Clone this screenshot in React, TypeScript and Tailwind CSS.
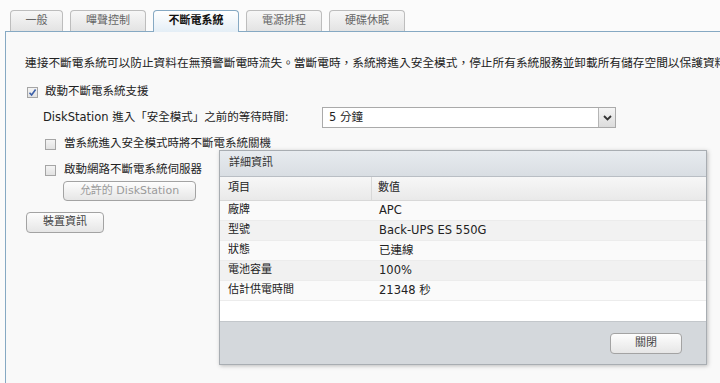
const font = "font-['DejaVu_Sans','Noto_Sans_CJK_TC',sans-serif]";

const tabs = ["一般", "嗶聲控制", "不斷電系統", "電源排程", "硬碟休眠"];

const rows = [
  { k: "廠牌", v: "APC", bg: "bg-[#fafafa]" },
  { k: "型號", v: "Back-UPS ES 550G", bg: "bg-[#f2f2f2]" },
  { k: "狀態", v: "已連線", bg: "bg-[#fafafa]" },
  { k: "電池容量", v: "100%", bg: "bg-[#f1f1f1]" },
  { k: "估計供電時間", v: "21348 秒", bg: "bg-[#fafafa]" },
];

const Checkbox = ({ checked }: { checked?: boolean }) => (
  <span className="flex h-[11px] w-[11px] items-center justify-center border border-[#a5a5a5] bg-gradient-to-b from-[#f4f4f4] to-[#e2e2e2]">
    {checked && (
      <svg width="9" height="9" viewBox="0 0 9 9">
        <path d="M1.5 4.8 L3.6 7 L7.6 1.6" fill="none" stroke="#3b5fa8" strokeWidth="1.6" />
      </svg>
    )}
  </span>
);

const Button = ({ children, className }: { children: React.ReactNode; className?: string }) => (
  <div
    className={
      "flex items-center justify-center rounded-[4px] border border-[#a3a3a3] bg-gradient-to-b from-[#fdfdfd] to-[#e6e6e6] text-[11px] " +
      (className ?? "")
    }
  >
    {children}
  </div>
);

export default function App() {
  return (
    <div className={`relative h-[383px] w-[720px] overflow-hidden bg-[#fbfbfb] text-[#333] ${font}`}>
      {/* tabs */}
      <div className="flex gap-[7px] pl-[10px] pt-[10px]">
        {tabs.map((t, i) =>
          i === 2 ? (
            <div
              key={t}
              className="-mb-px flex h-[22px] w-[86px] items-center justify-center rounded-t-[4px] border border-b-0 border-[#86a9c3] bg-gradient-to-b from-[#ffffff] to-[#e4eef6] text-[11px] font-bold text-[#111]"
            >
              {t}
            </div>
          ) : (
            <div
              key={t}
              className={
                "flex h-[21px] items-center justify-center rounded-t-[4px] border border-b-0 border-[#bdbdbd] bg-gradient-to-b from-[#f7f7f7] to-[#e3e3e3] text-[11px] text-[#666] " +
                (i === 0 ? "w-[53px]" : "w-[76px]")
              }
            >
              {t}
            </div>
          )
        )}
      </div>

      {/* content panel */}
      <div className="ml-[5px] h-[360px] border-l border-t border-[#86a9c3] bg-[#f9f9f9] pl-[19px] pt-[23px]">
        <p className="whitespace-nowrap text-[11.7px] leading-[16px] text-[#222]">
          連接不斷電系統可以防止資料在無預警斷電時流失。當斷電時，系統將進入安全模式，停止所有系統服務並卸載所有儲存空間以保護資料。
        </p>

        <div className="mt-[13px] flex h-[16px] items-center gap-[7px] pl-[2px]">
          <Checkbox checked />
          <span className="text-[11.5px] text-[#222]">啟動不斷電系統支援</span>
        </div>

        <div className="mt-[7px] flex h-[21px] items-center pl-[18px]">
          <span className="w-[279px] text-[11.5px] text-[#222]">DiskStation 進入「安全模式」之前的等待時間:</span>
          <div className="flex h-[21px] w-[294px] border border-[#aaaaaa] bg-white">
            <span className="flex-1 pl-[6px] text-[11.5px] leading-[19px] text-[#222]">5 分鐘</span>
            <span className="flex w-[17px] items-center justify-center border-l border-[#b5b5b5] bg-gradient-to-b from-[#f5f5f5] to-[#dcdcdc]">
              <svg width="9" height="6" viewBox="0 0 9 6">
                <path d="M1 1 L4.5 4.5 L8 1" fill="none" stroke="#333" strokeWidth="1.8" />
              </svg>
            </span>
          </div>
        </div>

        <div className="mt-[8px] flex h-[16px] items-center gap-[8px] pl-[20px]">
          <Checkbox />
          <span className="text-[11.5px] text-[#222]">當系統進入安全模式時將不斷電系統關機</span>
        </div>

        <div className="mt-[10px] flex h-[16px] items-center gap-[8px] pl-[20px]">
          <Checkbox />
          <span className="text-[11.5px] text-[#222]">啟動網路不斷電系統伺服器</span>
        </div>

        <div className="mt-[3px] pl-[38px]">
          <Button className="h-[20px] w-[133px] text-[#9a9a9a]">允許的 DiskStation</Button>
        </div>

        <div className="mt-[11px] pl-[1px]">
          <Button className="h-[21px] w-[78px] text-[#444]">裝置資訊</Button>
        </div>
      </div>

      {/* dialog */}
      <div className="absolute left-[219px] top-[150px] flex h-[215px] w-[488px] flex-col border border-[#a8adb2] bg-white shadow-[1px_1px_4px_rgba(0,0,0,0.25)]">
        <div className="flex h-[26px] items-center border-b border-[#b9bec4] bg-gradient-to-b from-[#e7ebef] to-[#d9dee3] pl-[9px] text-[11px] text-[#333]">
          詳細資訊
        </div>
        <div className="flex h-[24px] border-b border-[#d8d8d8] bg-gradient-to-b from-[#f7f7f7] to-[#e9e9e9] text-[11px] text-[#222]">
          <span className="flex w-[152px] items-center border-r border-[#d8d8d8] pl-[8px]">項目</span>
          <span className="flex items-center pl-[6px]">數值</span>
        </div>
        {rows.map((r) => (
          <div key={r.k} className={`flex h-[20px] items-center border-b border-[#ececec] text-[#222] ${r.bg}`}>
            <span className="w-[152px] pl-[8px] text-[11px]">{r.k}</span>
            <span className="pl-[7px] text-[11.5px]">{r.v}</span>
          </div>
        ))}
        <div className="flex-1 bg-white" />
        <div className="flex h-[43px] items-center justify-end border-t border-[#c3c7cb] bg-[#d4d8dc] pr-[24px]">
          <Button className="h-[21px] w-[72px] border-[#8f8f8f] text-[#444]">關閉</Button>
        </div>
      </div>
    </div>
  );
}
